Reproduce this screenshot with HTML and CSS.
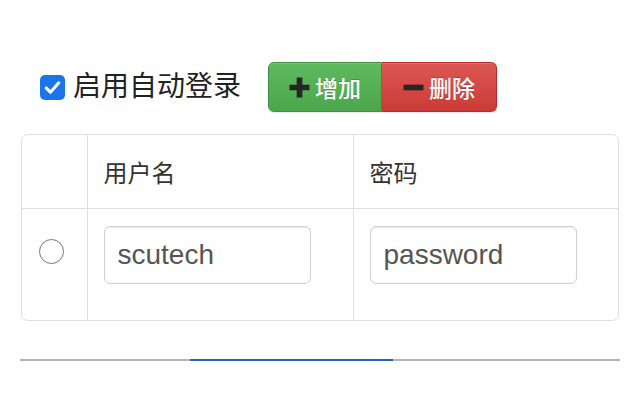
FILE: index.html
```html
<!DOCTYPE html>
<html lang="zh-CN">
<head>
<meta charset="utf-8">
<title>自动登录</title>
<link rel="stylesheet" href="styles.css">
</head>
<body>
<div class="page">
  <div class="toolbar">
    <label class="check">
      <span class="box"><svg viewBox="0 0 24 24" width="25" height="25"><path d="M6 12.5l4 4 8-9" fill="none" stroke="#fff" stroke-width="3" stroke-linecap="round" stroke-linejoin="round"/></svg></span>
      <span class="check-text">启用自动登录</span>
    </label>
    <div class="btn-group">
      <button class="btn btn-add"><svg class="ico" viewBox="0 0 20 20" width="21" height="21"><path d="M7.3 0.5h5.4v6.8h6.8v5.4h-6.8v6.8H7.3v-6.8H0.5V7.3h6.8z" fill="#262626"/></svg>增加</button>
      <button class="btn btn-del"><svg class="ico" viewBox="0 0 20 20" width="21" height="21"><path d="M0.5 7.3h19v5.4H0.5z" fill="#262626"/></svg>删除</button>
    </div>
  </div>
  <div class="table-wrap">
    <table class="grid">
      <thead>
        <tr><th class="c0"></th><th class="c1">用户名</th><th class="c2">密码</th></tr>
      </thead>
      <tbody>
        <tr>
          <td class="c0"><span class="radio"></span></td>
          <td class="c1"><div class="input">scutech</div></td>
          <td class="c2"><div class="input">password</div></td>
        </tr>
      </tbody>
    </table>
  </div>
  <div class="tabline"><div class="tab-active"></div></div>
</div>
</body>
</html>
```

FILE: styles.css
```css
html, body {
  margin: 0;
  padding: 0;
  background: #fff;
}
body {
  font-family: "Liberation Sans", "Noto Sans CJK SC", sans-serif;
  color: #333;
}
.page {
  padding: 62px 20px 0 21px;
}
.toolbar {
  display: flex;
  align-items: center;
  height: 50px;
}
.check {
  display: flex;
  align-items: center;
  margin-left: 19px;
  width: 228px;
}
.box {
  width: 25px;
  height: 25px;
  border-radius: 5px;
  background: #1b74ea;
  display: flex;
  align-items: center;
  justify-content: center;
}
.check-text {
  margin-left: 8px;
  font-family: "Noto Sans CJK SC", sans-serif;
  font-size: 28px;
  color: #222;
  line-height: 30px;
  position: relative;
  top: -3px;
  white-space: nowrap;
}
.btn-group {
  display: flex;
  height: 50px;
}
.btn {
  display: flex;
  align-items: center;
  justify-content: center;
  height: 50px;
  width: 115px;
  font-family: "Noto Sans CJK SC", sans-serif;
  font-weight: 500;
  font-size: 23px;
  color: #fff;
  text-shadow: 0 -1px 0 rgba(0,0,0,0.2);
  border: 1px solid;
  padding: 0;
  box-shadow: inset 0 1px 0 rgba(255,255,255,0.15), 0 1px 2px rgba(0,0,0,0.1);
}
.ico {
  margin-right: 5px;
}
.btn-add {
  background: linear-gradient(#5fb95f, #4ca64c);
  border-color: #3e8f3e;
  border-radius: 6px 0 0 6px;
  width: 114px;
}
.btn-del {
  background: linear-gradient(#dc5753, #cb3b37);
  border-color: #b92c28;
  border-left: none;
  border-radius: 0 6px 6px 0;
}
.table-wrap {
  margin-top: 22px;
  width: 596px;
  border: 1.5px solid #dfdfdf;
  border-radius: 7px;
  overflow: hidden;
}
.grid {
  width: 100%;
  border-collapse: collapse;
  table-layout: fixed;
}
.grid th, .grid td {
  box-sizing: border-box;
  text-align: left;
  vertical-align: top;
  border-left: 1.5px solid #dfdfdf;
}
.grid .c0 { border-left: none; width: 65px; }
.grid .c1 { width: 266px; }
.grid th {
  height: 73px;
  padding: 0 16px;
  font-family: "Noto Sans CJK SC", sans-serif;
  font-weight: normal;
  font-size: 24px;
  color: #333;
  vertical-align: middle;
  border-bottom: 1.5px solid #dfdfdf;
}
.grid td {
  padding: 17px 16px 36px;
}
.grid td.c0 {
  padding: 30px 0 0 17px;
}
.radio {
  display: block;
  width: 23px;
  height: 23px;
  border: 1.5px solid #767676;
  border-radius: 50%;
}
.input {
  width: 207px;
  height: 58px;
  box-sizing: border-box;
  border: 1.5px solid #cfcfcf;
  border-radius: 6px;
  box-shadow: inset 0 1px 1px rgba(0,0,0,0.075);
  font-size: 28px;
  color: #555;
  line-height: 56px;
  padding-left: 13px;
}
.tabline {
  margin-top: 38px;
  margin-left: -1px;
  width: 600px;
  height: 2px;
  background: #b4b4b4;
}
.tab-active {
  margin-left: 170px;
  width: 203px;
  height: 2px;
  background: #2a64b8;
}
```
